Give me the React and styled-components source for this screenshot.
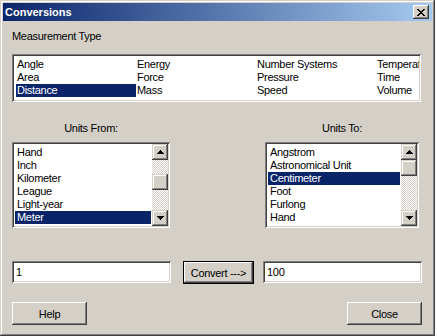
import React from "react";
import styled, { createGlobalStyle } from "styled-components";

const Global = createGlobalStyle`
  html, body { margin: 0; padding: 0; background: #ffffff; }
  * { box-sizing: border-box; }
`;

const raised = `
  box-shadow: inset -1px -1px #404040, inset 1px 1px #ffffff,
    inset -2px -2px #808080, inset 2px 2px #d4d0c8;
`;
const sunken = `
  box-shadow: inset 1px 1px #808080, inset -1px -1px #ffffff,
    inset 2px 2px #404040, inset -2px -2px #d4d0c8;
`;

const Window = styled.div`
  width: 435px;
  height: 336px;
  padding: 3px;
  background: #d4d0c8;
  box-shadow: inset -1px -1px #404040, inset 1px 1px #d4d0c8,
    inset -2px -2px #808080, inset 2px 2px #ffffff;
  display: flex;
  flex-direction: column;
  font-family: "Liberation Sans", Arial, sans-serif;
  font-size: 11px;
  letter-spacing: -0.3px;
  color: #000;
`;

const TitleBar = styled.div`
  height: 18px;
  display: flex;
  align-items: center;
  justify-content: space-between;
  padding: 0 3px 0 2px;
  background: linear-gradient(to right, #0a246a, #a6caf0);
`;

const Title = styled.span`
  color: #fff;
  font-weight: bold;
  letter-spacing: 0;
`;

const TitleClose = styled.div`
  width: 16px;
  height: 14px;
  background: #d4d0c8;
  ${raised}
  display: flex;
  align-items: center;
  justify-content: center;
`;

const Client = styled.div`
  flex: 1;
  display: flex;
  flex-direction: column;
  padding: 9px 10px 0 9px;
`;

const Label = styled.div`
  height: 13px;
  line-height: 13px;
  white-space: nowrap;
  text-align: ${(p) => (p.$center ? "center" : "left")};
`;

const MeasureBox = styled.div`
  margin-top: 11px;
  width: 409px;
  height: 48px;
  padding: 2px;
  background: #fff;
  ${sunken}
`;

const MeasureGrid = styled.div`
  height: 100%;
  padding: 2px 0 0 2px;
  overflow: hidden;
  display: grid;
  grid-auto-flow: column;
  grid-template-rows: repeat(3, 13px);
  grid-auto-columns: 120px;
`;

const Item = styled.div`
  height: 13px;
  line-height: 13px;
  padding-left: ${(p) => p.$pad}px;
  white-space: nowrap;
  overflow: hidden;
  background: ${(p) => (p.$sel ? "#0a246a" : "transparent")};
  color: ${(p) => (p.$sel ? "#fff" : "#000")};
`;

const UnitsRow = styled.div`
  margin-top: 20px;
  display: grid;
  grid-template-columns: 158px 1fr 154px;
  padding-right: 3px;
`;

const UnitCol = styled.div`
  grid-column: ${(p) => p.$col};
  display: flex;
  flex-direction: column;
`;

const ListBox = styled.div`
  margin-top: 7px;
  height: 86px;
  padding: 2px;
  display: flex;
  background: #fff;
  ${sunken}
`;

const ListItems = styled.div`
  flex: 1;
  padding: 2px 1px;
  overflow: hidden;
`;

const ScrollBar = styled.div`
  width: 16px;
  display: flex;
  flex-direction: column;
`;

const ScrollBtn = styled.div`
  width: 16px;
  height: 16px;
  background: #d4d0c8;
  box-shadow: inset -1px -1px #404040, inset 1px 1px #d4d0c8,
    inset -2px -2px #808080, inset 2px 2px #ffffff;
  display: flex;
  align-items: center;
  justify-content: center;
`;

const Track = styled.div`
  flex: 1;
  background: repeating-conic-gradient(#d4d0c8 0 25%, #ffffff 0 50%) 0 0 / 2px 2px;
`;

const Thumb = styled(ScrollBtn)`
  margin-top: ${(p) => p.$offset}px;
`;

const FieldRow = styled.div`
  margin-top: 33px;
  display: flex;
  align-items: flex-start;
`;

const Field = styled.div`
  width: 159px;
  height: 22px;
  margin-left: ${(p) => p.$ml || 0}px;
  padding-left: 4px;
  line-height: 22px;
  background: #fff;
  ${sunken}
`;

const Button = styled.div`
  width: ${(p) => p.$w}px;
  height: 23px;
  margin-left: ${(p) => p.$ml || 0}px;
  display: flex;
  align-items: center;
  justify-content: center;
  background: #d4d0c8;
  ${raised}
`;

const DefaultButton = styled(Button)`
  border: 1px solid #000;
  box-shadow: inset -1px -1px #404040, inset 1px 1px #ffffff,
    inset -2px -2px #808080;
`;

const ButtonRow = styled.div`
  margin-top: 18px;
  display: flex;
  justify-content: space-between;
`;

const Arrow = ({ down }) => (
  <svg width="7" height="4" viewBox="0 0 7 4" shapeRendering="crispEdges"
    style={down ? { transform: "scaleY(-1)" } : undefined}>
    <path d="M3 0h1v1h1v1h1v1h1v1H0V3h1V2h1V1h1z" fill="#000" />
  </svg>
);

const XIcon = () => (
  <svg width="8" height="7" viewBox="0 0 8 7" shapeRendering="crispEdges">
    <path d="M0 0h2v1h1v1h2V1h1V0h2v1H7v1H6v1H5v1h1v1h1v1h1v1H6V6H5V5H3v1H2v1H0V6h1V5h1V4h1V3H2V2H1V1H0z" fill="#000" />
  </svg>
);

const measures = [
  "Angle", "Area", "Distance",
  "Energy", "Force", "Mass",
  "Number Systems", "Pressure", "Speed",
  "Temperature", "Time", "Volume",
];

const fromUnits = ["Hand", "Inch", "Kilometer", "League", "Light-year", "Meter"];
const toUnits = ["Angstrom", "Astronomical Unit", "Centimeter", "Foot", "Furlong", "Hand"];

const UnitList = ({ items, selected, thumb }) => (
  <ListBox>
    <ListItems>
      {items.map((t) => (
        <Item key={t} $pad={2} $sel={t === selected}>{t}</Item>
      ))}
    </ListItems>
    <ScrollBar>
      <ScrollBtn><Arrow /></ScrollBtn>
      <Track>
        <Thumb $offset={thumb} />
      </Track>
      <ScrollBtn><Arrow down /></ScrollBtn>
    </ScrollBar>
  </ListBox>
);

export default function App() {
  return (
    <>
      <Global />
      <Window>
        <TitleBar>
          <Title>Conversions</Title>
          <TitleClose><XIcon /></TitleClose>
        </TitleBar>
        <Client>
          <Label>Measurement Type</Label>
          <MeasureBox>
            <MeasureGrid>
              {measures.map((m) => (
                <Item key={m} $pad={1} $sel={m === "Distance"}>{m}</Item>
              ))}
            </MeasureGrid>
          </MeasureBox>
          <UnitsRow>
            <UnitCol $col={1}>
              <Label $center>Units From:</Label>
              <UnitList items={fromUnits} selected="Meter" thumb={14} />
            </UnitCol>
            <UnitCol $col={3}>
              <Label $center>Units To:</Label>
              <UnitList items={toUnits} selected="Centimeter" thumb={0} />
            </UnitCol>
          </UnitsRow>
          <FieldRow>
            <Field>1</Field>
            <DefaultButton $w={71} $ml={12}>Convert ---&gt;</DefaultButton>
            <Field $ml={9}>100</Field>
          </FieldRow>
          <ButtonRow>
            <Button $w={75}>Help</Button>
            <Button $w={75}>Close</Button>
          </ButtonRow>
        </Client>
      </Window>
    </>
  );
}
